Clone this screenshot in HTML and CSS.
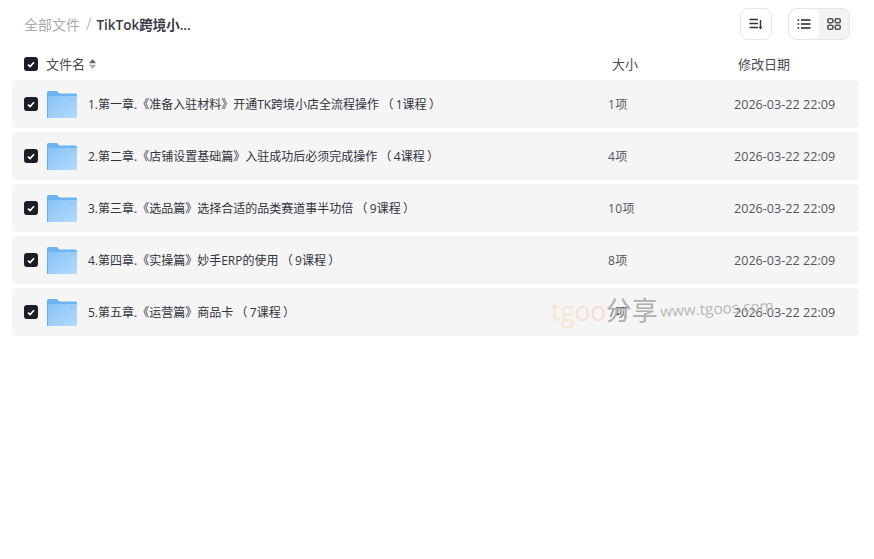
FILE: index.html
```html
<!DOCTYPE html>
<html lang="zh-CN">
<head>
  <meta charset="UTF-8">
  <title>全部文件</title>
  <link rel="stylesheet" href="styles.css">
</head>
<body>
  <div class="toolbar">
    <div class="crumbs">
      <span class="crumb-root">全部文件</span>
      <span class="crumb-sep">/</span>
      <span class="crumb-current">TikTok跨境小...</span>
    </div>
    <div class="tools">
      <button class="tool-btn">
        <svg width="14" height="12" viewBox="0 0 14 12"><path d="M0.5 1.5H9M0.5 5.5H9M0.5 9.5H9" stroke="#333" stroke-width="1.4" fill="none"/><path d="M11.5 2V10" stroke="#333" stroke-width="1.4"/><path d="M9.6 8.8H13.4L11.5 11.6Z" fill="#333"/></svg>
      </button>
      <div class="view-switch">
        <span class="view-item active">
          <svg width="14" height="10" viewBox="0 0 14 10"><path d="M0.5 1H2.2M0.5 5H2.2M0.5 9H2.2M4 1H13.5M4 5H13.5M4 9H13.5" stroke="#222" stroke-width="1.3" fill="none"/></svg>
        </span>
        <span class="view-item">
          <svg width="14" height="12" viewBox="0 0 14 12" fill="none" stroke="#555" stroke-width="1.6"><rect x="0.8" y="0.8" width="5" height="4" rx="1.3"/><rect x="8.2" y="0.8" width="5" height="4" rx="1.3"/><rect x="0.8" y="7.2" width="5" height="4" rx="1.3"/><rect x="8.2" y="7.2" width="5" height="4" rx="1.3"/></svg>
        </span>
      </div>
    </div>
  </div>

  <div class="list-head">
    <span class="check"><svg width="8" height="7" viewBox="0 0 8 7"><path d="M1 3.6L3.1 5.6L7 1.2" stroke="#fff" stroke-width="1.6" fill="none"/></svg></span>
    <span class="head-name">文件名
      <svg class="sort-icon" width="7" height="10" viewBox="0 0 7 10"><path d="M3.5 0L7 4.3H0Z" fill="#666"/><path d="M3.5 10L0 5.7H7Z" fill="#aaa"/></svg>
    </span>
    <span class="head-size">大小</span>
    <span class="head-date">修改日期</span>
  </div>

  <ul class="file-list">
    <li class="file-row">
      <span class="check"><svg width="8" height="7" viewBox="0 0 8 7"><path d="M1 3.6L3.1 5.6L7 1.2" stroke="#fff" stroke-width="1.6" fill="none"/></svg></span>
      <svg class="folder" width="30" height="27" viewBox="0 0 30 27"><use href="#folder-shape"/></svg>
      <span class="file-name">1.第一章.《准备入驻材料》开通TK跨境小店全流程操作 （ 1课程 ）</span>
      <span class="file-size">1项</span>
      <span class="file-date">2026-03-22 22:09</span>
    </li>
    <li class="file-row">
      <span class="check"><svg width="8" height="7" viewBox="0 0 8 7"><path d="M1 3.6L3.1 5.6L7 1.2" stroke="#fff" stroke-width="1.6" fill="none"/></svg></span>
      <svg class="folder" width="30" height="27" viewBox="0 0 30 27"><use href="#folder-shape"/></svg>
      <span class="file-name">2.第二章.《店铺设置基础篇》入驻成功后必须完成操作 （ 4课程 ）</span>
      <span class="file-size">4项</span>
      <span class="file-date">2026-03-22 22:09</span>
    </li>
    <li class="file-row">
      <span class="check"><svg width="8" height="7" viewBox="0 0 8 7"><path d="M1 3.6L3.1 5.6L7 1.2" stroke="#fff" stroke-width="1.6" fill="none"/></svg></span>
      <svg class="folder" width="30" height="27" viewBox="0 0 30 27"><use href="#folder-shape"/></svg>
      <span class="file-name">3.第三章.《选品篇》选择合适的品类赛道事半功倍 （ 9课程 ）</span>
      <span class="file-size">10项</span>
      <span class="file-date">2026-03-22 22:09</span>
    </li>
    <li class="file-row">
      <span class="check"><svg width="8" height="7" viewBox="0 0 8 7"><path d="M1 3.6L3.1 5.6L7 1.2" stroke="#fff" stroke-width="1.6" fill="none"/></svg></span>
      <svg class="folder" width="30" height="27" viewBox="0 0 30 27"><use href="#folder-shape"/></svg>
      <span class="file-name">4.第四章.《实操篇》妙手ERP的使用 （ 9课程 ）</span>
      <span class="file-size">8项</span>
      <span class="file-date">2026-03-22 22:09</span>
    </li>
    <li class="file-row">
      <span class="check"><svg width="8" height="7" viewBox="0 0 8 7"><path d="M1 3.6L3.1 5.6L7 1.2" stroke="#fff" stroke-width="1.6" fill="none"/></svg></span>
      <svg class="folder" width="30" height="27" viewBox="0 0 30 27"><use href="#folder-shape"/></svg>
      <span class="file-name">5.第五章.《运营篇》商品卡 （ 7课程 ）</span>
      <span class="file-size">7项</span>
      <span class="file-date">2026-03-22 22:09</span>
    </li>
  </ul>

  <!-- watermark -->
  <div class="watermark">
    <span class="wm-logo"><span class="wm-t">t</span><span class="wm-g">g</span><span class="wm-o1">o</span><span class="wm-o2">o</span></span>
    <span class="wm-share">分享</span>
    <span class="wm-url">www.tgoos.com</span>
  </div>

  <svg width="0" height="0" class="defs">
    <defs>
      <linearGradient id="folder-front" x1="0" y1="0" x2="1" y2="1">
        <stop offset="0" stop-color="#86c2f8"/>
        <stop offset="1" stop-color="#b4dafc"/>
      </linearGradient>
      <g id="folder-shape">
        <path d="M0 1.5Q0 0 1.5 0H10L12.5 2.5H28.5Q30 2.5 30 4V8H0Z" fill="#6db4f2"/>
        <path d="M0 5H30V26Q30 27 29 27H1Q0 27 0 26Z" fill="url(#folder-front)"/>
        <path d="M0 5H1V27Q0 27 0 26Z" fill="#62acef"/>
        <rect x="23" y="7" width="3.5" height="2.5" fill="#96c9f6"/>
      </g>
    </defs>
  </svg>
</body>
</html>
```

FILE: styles.css
```css
html, body {
  margin: 0;
  padding: 0;
  background: #fff;
}

body {
  font-family: "Open Sans", "Noto Sans CJK SC", sans-serif;
  color: #33333d;
  font-size: 12px;
  width: 874px;
  height: 559px;
  overflow: hidden;
  position: relative;
}

.toolbar {
  display: flex;
  justify-content: space-between;
  align-items: center;
  height: 48px;
  padding: 0 24px;
}

.crumbs {
  display: flex;
  align-items: center;
  font-size: 14px;
}

.crumb-root {
  color: #a8a8ae;
}

.crumb-sep {
  color: #a8a8ae;
  font-size: 16px;
  font-weight: 300;
  margin: 0 5px 0 6px;
}

.crumb-current {
  font-weight: 600;
  font-size: 13.5px;
  color: #3a3a44;
}

.tools {
  display: flex;
  gap: 16px;
  align-items: center;
}

.tool-btn {
  display: flex;
  align-items: center;
  justify-content: center;
  width: 32px;
  height: 32px;
  padding: 0;
  background: #fff;
  border: 1px solid #e6e6e8;
  border-radius: 8px;
}

.view-switch {
  display: flex;
  width: 60px;
  height: 30px;
  background: #f3f3f4;
  border: 1px solid #e6e6e8;
  border-radius: 8px;
  overflow: hidden;
}

.view-item {
  display: flex;
  align-items: center;
  justify-content: center;
  width: 30px;
}

.view-item.active {
  background: #fff;
  border-radius: 8px;
}

.list-head {
  display: flex;
  align-items: center;
  height: 32px;
  padding-left: 24px;
  font-size: 13px;
  color: #4a4a52;
}

.check {
  display: flex;
  align-items: center;
  justify-content: center;
  flex: none;
  width: 14px;
  height: 14px;
  background: #1d1d25;
  border-radius: 3px;
}

.head-name {
  display: flex;
  align-items: center;
  gap: 4px;
  width: 566px;
  margin-left: 8px;
  margin-bottom: 2px;
}

.sort-icon {
  margin-top: 2px;
}

.head-size {
  width: 126px;
  margin-bottom: 2px;
}

.head-date {
  margin-bottom: 2px;
}

.file-list {
  list-style: none;
  margin: 0;
  padding: 0 15px 0 12px;
  display: flex;
  flex-direction: column;
  gap: 4px;
}

.file-row {
  display: flex;
  align-items: center;
  height: 48px;
  padding-left: 12px;
  background: #f5f5f5;
  border-radius: 4px;
}

.folder {
  flex: none;
  margin-left: 9px;
  margin-top: 1px;
}

.file-name {
  width: 520px;
  margin-left: 11px;
  white-space: nowrap;
  word-spacing: -0.8px;
}

.file-size {
  width: 126px;
  letter-spacing: 0.4px;
  color: #55555d;
}

.file-date {
  font-size: 12.6px;
  color: #55555d;
}

.watermark {
  position: absolute;
  left: 551px;
  top: 288px;
  display: flex;
  align-items: center;
  white-space: nowrap;
  pointer-events: none;
}

.wm-logo {
  font-family: "Open Sans", sans-serif;
  font-size: 27px;
  opacity: 0.3;
  letter-spacing: -0.5px;
  margin-top: 4px;
}

.wm-t { color: #f5c97a; }
.wm-g { color: #f7c98a; }
.wm-o1 { color: #f8b98a; }
.wm-o2 { color: #f6a89a; }

.wm-share {
  font-size: 26px;
  color: #b0b0b0;
  margin-left: 0;
}

.wm-url {
  font-size: 15.3px;
  color: #b8b8b8;
  margin-left: 2px;
  margin-bottom: 2px;
  transform: rotate(-3deg);
}

.defs {
  position: absolute;
}
```
